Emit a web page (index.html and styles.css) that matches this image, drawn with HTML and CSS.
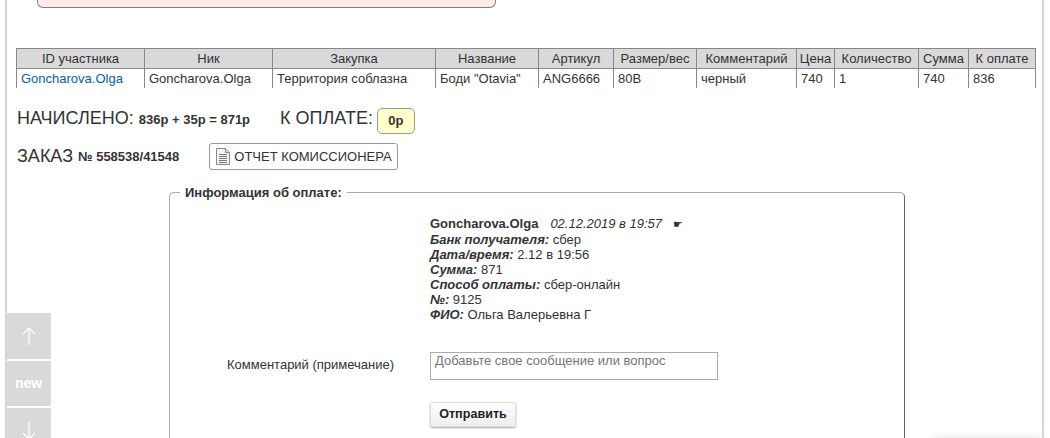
FILE: index.html
```html
<!DOCTYPE html>
<html lang="ru">
<head>
<meta charset="utf-8">
<title>Информация об оплате</title>
<link rel="stylesheet" href="styles.css">
</head>
<body>
<div class="page">
  <div class="notice"></div>
  <table class="orders">
    <colgroup>
      <col class="c1"><col class="c2"><col class="c3"><col class="c4"><col class="c5"><col class="c6"><col class="c7"><col class="c8"><col class="c9"><col class="c10"><col class="c11">
    </colgroup>
    <thead>
      <tr><th>ID участника</th><th>Ник</th><th>Закупка</th><th>Название</th><th>Артикул</th><th>Размер/вес</th><th>Комментарий</th><th>Цена</th><th>Количество</th><th>Сумма</th><th>К оплате</th></tr>
    </thead>
    <tbody>
      <tr><td><a href="#">Goncharova.Olga</a></td><td>Goncharova.Olga</td><td>Территория соблазна</td><td>Боди "Otavia"</td><td>ANG6666</td><td>80B</td><td>черный</td><td>740</td><td>1</td><td>740</td><td>836</td></tr>
    </tbody>
  </table>
  <div class="totals">
    <span class="big">НАЧИСЛЕНО:</span>
    <b class="sum">836р + 35р = 871р</b>
    <span class="big due">К ОПЛАТЕ:</span>
    <b class="due-box">0р</b>
  </div>
  <div class="order">
    <span class="big">ЗАКАЗ</span>
    <b class="order-no">№ 558538/41548</b>
    <button class="report" type="button">
      <svg class="doc" width="14" height="17" viewBox="0 0 14 17"><path d="M.5.5H9.5L13.5 4.5V16.5H.5Z" fill="#f4f4f4" stroke="#8a8a8a"/><path d="M9.5.5V4.5H13.5" fill="#ddd" stroke="#8a8a8a"/><path d="M3 6.5H11M3 8.5H11M3 10.5H11M3 12.5H11M3 14.5H11" stroke="#777"/></svg>
      ОТЧЕТ КОМИССИОНЕРА
    </button>
  </div>
  <fieldset class="info">
    <legend>Информация об оплате:</legend>
    <div class="info-body">
      <div class="message">
        <div><b>Goncharova.Olga</b><i class="stamp">02.12.2019 в 19:57</i><span class="hand">☛</span></div>
        <div><b><i>Банк получателя:</i></b> сбер</div>
        <div><b><i>Дата/время:</i></b> 2.12 в 19:56</div>
        <div><b><i>Сумма:</i></b> 871</div>
        <div><b><i>Способ оплаты:</i></b> сбер-онлайн</div>
        <div><b><i>№:</i></b> 9125</div>
        <div><b><i>ФИО:</i></b> Ольга Валерьевна Г</div>
      </div>
      <div class="comment">
        <label class="comment-label" for="note">Комментарий (примечание)</label>
        <textarea id="note" class="note" placeholder="Добавьте свое сообщение или вопрос"></textarea>
      </div>
      <button class="send" type="button">Отправить</button>
    </div>
  </fieldset>
  <nav class="float-nav">
    <a class="nav-btn" href="#"><svg width="16" height="20" viewBox="0 0 16 20"><path d="M8 19V2M2 8L8 2L14 8" fill="none" stroke="#fff" stroke-width="1.2"/></svg></a>
    <a class="nav-btn nav-new" href="#">new</a>
    <a class="nav-btn" href="#"><svg width="16" height="20" viewBox="0 0 16 20"><path d="M8 1V18M2 12L8 18L14 12" fill="none" stroke="#fff" stroke-width="1.2"/></svg></a>
  </nav>
  <div class="corner-shade"></div>
</div>
</body>
</html>
```
FILE: styles.css
```css
* { box-sizing: border-box; }
html, body { margin: 0; height: 100%; overflow: hidden; background: #fff; }
body { font: 13px/15px "Liberation Sans", Arial, sans-serif; color: #333; }
.page {
  position: relative;
  width: 1039px;
  height: 438px;
  margin-left: 5px;
  padding-left: 9px;
  border-left: 2px solid #d4d4d4;
  border-right: 2px solid #d4d4d4;
  overflow: hidden;
}
.notice {
  width: 459px;
  height: 8px;
  margin-left: 21px;
  background: #fdeaea;
  border: 1px solid #808080;
  border-top: 0;
  border-radius: 0 0 6px 6px;
}
.orders {
  width: 1019px;
  margin-top: 40px;
  table-layout: fixed;
  border-collapse: collapse;
  border: 1px solid #888;
  border-bottom: 0;
}
.c1, .c2 { width: 128px; }
.c3 { width: 163px; }
.c4 { width: 103px; }
.c5 { width: 75px; }
.c6 { width: 83px; }
.c7 { width: 100px; }
.c8 { width: 38px; }
.c9 { width: 84px; }
.c10 { width: 50px; }
.c11 { width: 67px; }
.orders th {
  height: 20px;
  padding: 0;
  background: #d9d9d9;
  border: 1px solid #888;
  font-weight: normal;
  text-align: center;
  white-space: nowrap;
}
.orders td {
  height: 19px;
  padding: 0 4px;
  border-left: 1px solid #888;
  border-right: 1px solid #888;
  white-space: nowrap;
}
.orders a { color: #0b5cad; text-decoration: none; }
.totals {
  display: flex;
  align-items: baseline;
  height: 27px;
  margin-top: 19px;
  padding-left: 1px;
}
.big { font-size: 18px; line-height: 22px; }
.sum { margin-left: 5px; }
.due { margin-left: 30px; }
.due-box {
  display: flex;
  align-self: flex-start;
  align-items: center;
  justify-content: center;
  width: 38px;
  height: 26px;
  margin-top: 1px;
  margin-left: 4px;
  background: #ffffcc;
  border: 1px solid #999;
  border-radius: 5px;
}
.order {
  display: flex;
  align-items: center;
  height: 27px;
  margin-top: 9px;
  padding-left: 1px;
}
.order-no { margin-left: 5px; }
.report {
  display: flex;
  align-items: center;
  gap: 4px;
  width: 189px;
  height: 27px;
  margin-left: 30px;
  padding: 0 6px;
  background: #fff;
  border: 1px solid #999;
  border-radius: 3px;
  color: #333;
  font: 13px "Liberation Sans", Arial, sans-serif;
  white-space: nowrap;
}
.doc { flex: none; }
.info {
  position: relative;
  width: 736px;
  min-height: 300px;
  margin: 15px 0 0 153px;
  padding: 0;
  border: 1px solid #aaa;
  border-right-color: #666;
  border-radius: 5px;
}
.info legend {
  margin-left: 10px;
  padding: 0 5px;
  font-weight: bold;
}
.info-body { padding: 16px 0 0 260px; }
.stamp { margin-left: 12px; }
.hand { margin-left: 11px; font-size: 11px; }
.comment {
  display: flex;
  align-items: flex-start;
  margin-top: 30px;
}
.comment-label {
  position: absolute;
  left: 57px;
  margin-top: 5px;
}
.note {
  display: block;
  width: 288px;
  height: 28px;
  padding: 0 4px;
  border: 1px solid #aaa;
  border-radius: 0;
  resize: none;
  font: 13px/15px "Liberation Sans", Arial, sans-serif;
}
.note::placeholder { color: #757575; opacity: 1; }
.send {
  display: block;
  width: 86px;
  height: 25px;
  margin-top: 22px;
  padding: 0;
  background: linear-gradient(#fff, #eee);
  border: 1px solid #ddd;
  border-radius: 3px;
  box-shadow: 0 1px 2px rgba(0,0,0,.35);
  color: #222;
  font: bold 12.6px "Liberation Sans", Arial, sans-serif;
}
.float-nav {
  position: absolute;
  left: -1px;
  top: 313px;
  display: flex;
  flex-direction: column;
  gap: 2px;
}
.nav-btn {
  display: flex;
  align-items: center;
  justify-content: center;
  width: 45px;
  height: 46px;
  background: #d9d9d9;
  border-radius: 2px;
  color: #fff;
  text-decoration: none;
}
.nav-new { font-size: 14px; font-weight: bold; height: 45px; }
.corner-shade {
  position: absolute;
  right: 0;
  bottom: -8px;
  width: 110px;
  height: 8px;
  box-shadow: 0 0 8px rgba(0,0,0,.12);
}
```
